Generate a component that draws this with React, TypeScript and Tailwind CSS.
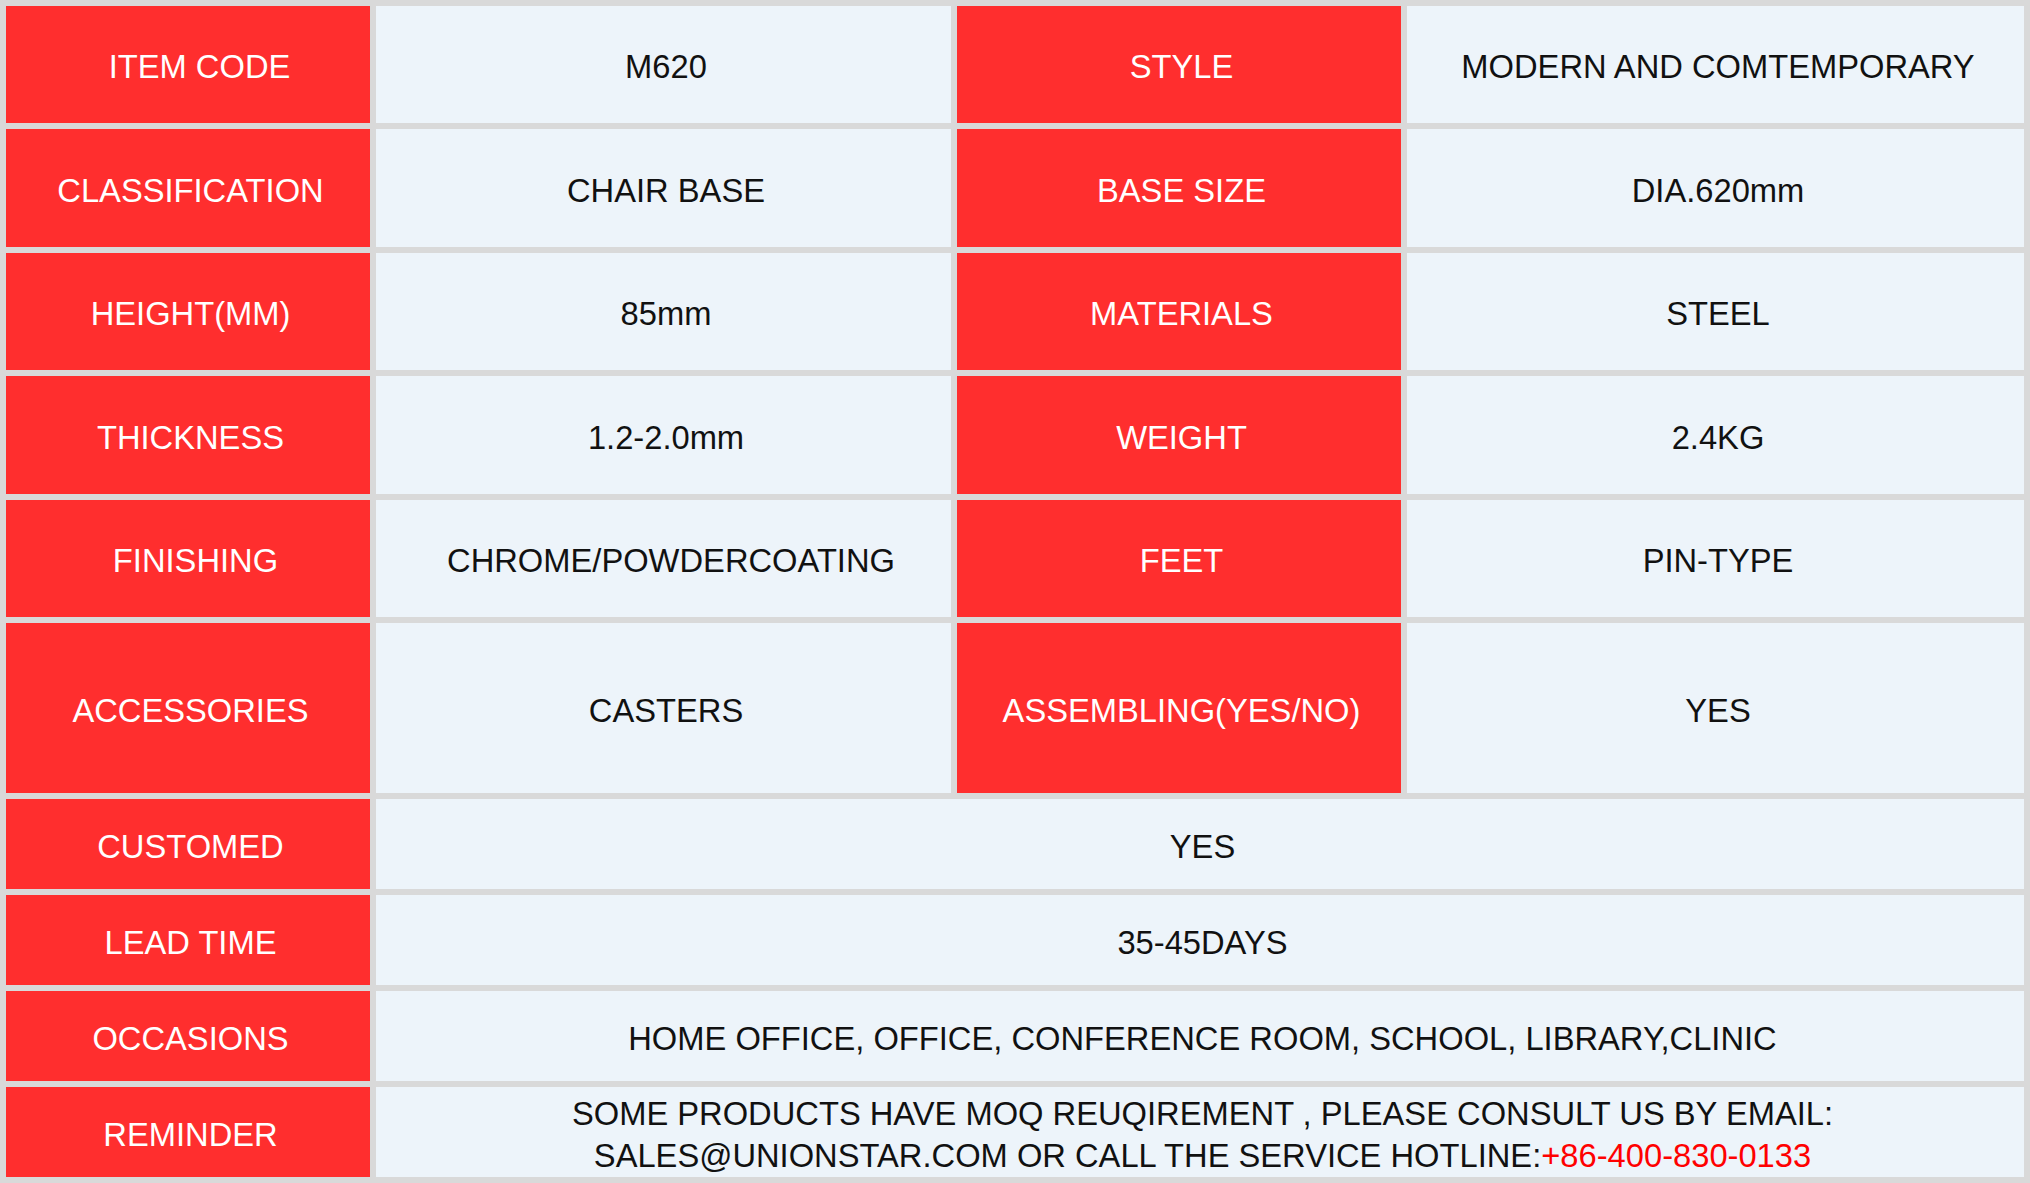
const pairs = [
  ["ITEM CODE", "M620", "STYLE", "MODERN AND COMTEMPORARY"],
  ["CLASSIFICATION", "CHAIR BASE", "BASE SIZE", "DIA.620mm"],
  ["HEIGHT(MM)", "85mm", "MATERIALS", "STEEL"],
  ["THICKNESS", "1.2-2.0mm", "WEIGHT", "2.4KG"],
  ["FINISHING", "CHROME/POWDERCOATING", "FEET", "PIN-TYPE"],
  ["ACCESSORIES", "CASTERS", "ASSEMBLING(YES/NO)", "YES"],
];

const wide = [
  ["CUSTOMED", "YES"],
  ["LEAD TIME", "35-45DAYS"],
  ["OCCASIONS", "HOME OFFICE, OFFICE, CONFERENCE ROOM, SCHOOL, LIBRARY,CLINIC"],
];

const label = "flex items-center justify-center bg-[#ff2e2e] text-white text-center pt-[5px]";
const value = "flex items-center justify-center bg-[#edf4fa] text-[#111111] text-center pt-[5px]";

const nudge: Record<string, string> = {
  "ITEM CODE": "pl-[23px]",
  FINISHING: "pl-[15px]",
  "CHROME/POWDERCOATING": "pl-[15px]",
};
const pad = (t: string) => nudge[t] ?? "pl-[5px]";

export default function App() {
  return (
    <div
      className="w-[2030px] h-[1183px] bg-[#d9d9d9] p-[6px] text-[32.7px] leading-[42px]"
      style={{ fontFamily: '"Liberation Sans", Arial, sans-serif' }}
    >
      <div className="grid h-full grid-cols-[364px_575px_444px_617px] grid-rows-[117px_118px_117px_118px_117px_170px_90px_90px_90px_90px] gap-[6px]">
        {pairs.map((row) => (
          <div key={row[0]} className="contents">
            <div className={`${label} ${pad(row[0])}`}>{row[0]}</div>
            <div className={`${value} ${pad(row[1])}`}>{row[1]}</div>
            <div className={`${label} ${pad(row[2])}`}>{row[2]}</div>
            <div className={`${value} ${pad(row[3])}`}>{row[3]}</div>
          </div>
        ))}
        {wide.map((row) => (
          <div key={row[0]} className="contents">
            <div className={`${label} pl-[5px]`}>{row[0]}</div>
            <div className={`${value} col-span-3 pl-[5px]`}>{row[1]}</div>
          </div>
        ))}
        <div className={`${label} pl-[5px]`}>REMINDER</div>
        <div className={`${value} col-span-3 flex-col pl-[5px]`}>
          <span>SOME PRODUCTS HAVE MOQ REUQIREMENT , PLEASE CONSULT US BY EMAIL:</span>
          <span>
            SALES@UNIONSTAR.COM OR CALL THE SERVICE HOTLINE:
            <span className="text-[#ff0000]">+86-400-830-0133</span>
          </span>
        </div>
      </div>
    </div>
  );
}
